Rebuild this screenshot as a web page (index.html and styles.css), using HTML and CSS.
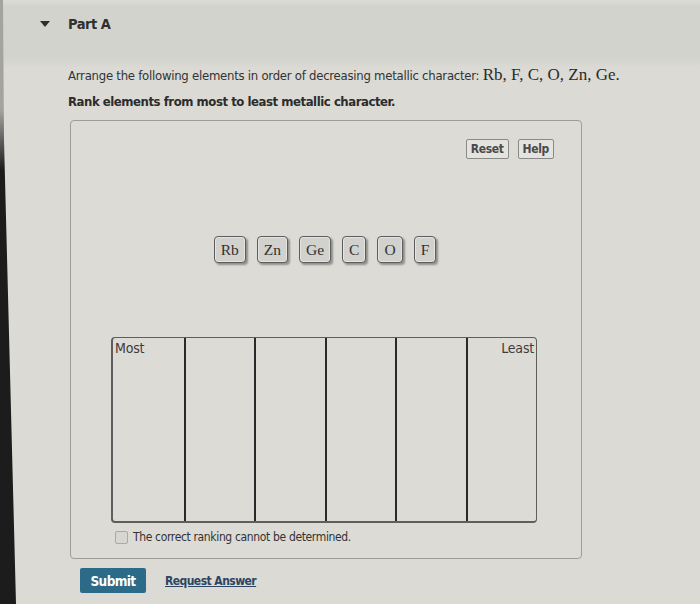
FILE: index.html
```html
<!DOCTYPE html>
<html lang="en">
<head>
<meta charset="utf-8">
<title>Part A</title>
<link rel="stylesheet" href="styles.css">
</head>
<body>
<div class="screen">
  <div class="bezel"></div>
  <main class="main">
    <header class="part-head">
      <span class="caret"></span>
      <h2 class="part-title">Part A</h2>
    </header>
    <section class="question">
      <p class="prompt">Arrange the following elements in order of decreasing metallic character: <span class="math">Rb, F, C, O, Zn, Ge.</span></p>
      <p class="instruction">Rank elements from most to least metallic character.</p>
      <div class="widget">
        <div class="tools">
          <button class="tool-btn">Reset</button>
          <button class="tool-btn">Help</button>
        </div>
        <div class="tiles">
          <span class="tile">Rb</span>
          <span class="tile">Zn</span>
          <span class="tile">Ge</span>
          <span class="tile">C</span>
          <span class="tile">O</span>
          <span class="tile">F</span>
        </div>
        <div class="board">
          <div class="ranking">
            <div class="slot"><span class="slot-label">Most</span></div>
            <div class="slot"></div>
            <div class="slot"></div>
            <div class="slot"></div>
            <div class="slot"></div>
            <div class="slot slot-last"><span class="slot-label">Least</span></div>
          </div>
          <label class="cannot"><span class="checkbox"></span>The correct ranking cannot be determined.</label>
        </div>
      </div>
      <div class="actions">
        <button class="submit">Submit</button>
        <a class="request">Request Answer</a>
      </div>
    </section>
  </main>
</div>
</body>
</html>
```

FILE: styles.css
```css
html, body {
  margin: 0;
  padding: 0;
}

body {
  width: 700px;
  height: 604px;
  overflow: hidden;
  background: linear-gradient(to bottom, #dcdcd7 0, #d3d3ce 6px, #d3d3ce 58px, #dbdad5 68px, #dbdad5 100%);
  font-family: "DejaVu Sans Condensed", "Liberation Sans", sans-serif;
  color: #333;
}

.screen {
  display: flex;
  height: 604px;
}

.bezel {
  flex: 0 0 16px;
  background: linear-gradient(to bottom, #a3a3a0 0, #a3a3a0 110px, #1c1c1c 170px, #1c1c1c 100%);
  clip-path: polygon(0 0, 3px 0, 4px 140px, 16px 100%, 0 100%);
}

.main {
  flex: 1;
  display: flex;
  flex-direction: column;
}

.part-head {
  height: 65px;
  box-sizing: border-box;
  padding: 14px 0 0 24px;
  display: flex;
  align-items: flex-start;
}

.caret {
  width: 0;
  height: 0;
  border-left: 5px solid transparent;
  border-right: 5px solid transparent;
  border-top: 6px solid #2e2e2e;
  margin-top: 7px;
}

.part-title {
  margin: 0 0 0 18px;
  font-size: 14.5px;
  letter-spacing: -0.5px;
  line-height: 20px;
  font-weight: bold;
  color: #2f2f2f;
}

.question {
  padding-left: 52px;
}

.prompt {
  margin: 0;
  font-size: 13px;
  letter-spacing: -0.25px;
  line-height: 20px;
  color: #333;
}

.math {
  font-family: "Liberation Serif", serif;
  font-size: 17px;
  letter-spacing: 0;
  line-height: 20px;
  color: #2a2a2a;
}

.instruction {
  margin: 6px 0 0;
  font-size: 13px;
  letter-spacing: -0.45px;
  line-height: 20px;
  font-weight: bold;
  color: #2c2c2c;
}

.widget {
  margin: 8px 0 0 2px;
  width: 512px;
  height: 439px;
  box-sizing: border-box;
  border: 1px solid #9d9d9a;
  border-radius: 4px;
  background: #dcdbd6;
  padding-top: 18px;
  display: flex;
  flex-direction: column;
}

.tools {
  display: flex;
  justify-content: flex-end;
  gap: 9px;
  padding-right: 27px;
}

.tool-btn {
  height: 20px;
  box-sizing: border-box;
  padding: 0 4px;
  border: 1px solid #8a8a88;
  border-radius: 2px;
  background: #e3e3df;
  font-family: "DejaVu Sans Condensed", "Liberation Sans", sans-serif;
  font-weight: bold;
  font-size: 12px;
  letter-spacing: -0.35px;
  line-height: 18px;
  color: #4a4a4a;
}

.tiles {
  display: flex;
  justify-content: center;
  gap: 11px;
  margin-top: 77px;
  padding-right: 2px;
}

.tile {
  height: 27px;
  box-sizing: border-box;
  padding: 0 6px;
  border: 1px solid #5d5d5d;
  border-radius: 4px;
  background: #d1d1cd;
  box-shadow: 2px 2px 2px rgba(0, 0, 0, 0.35), inset 0 0 0 1px #e4e4e0;
  font-family: "Liberation Serif", serif;
  font-size: 15.5px;
  line-height: 25px;
  color: #333;
}

.board {
  width: 426px;
  margin: 74px 0 0 40px;
}

.ranking {
  height: 186px;
  box-sizing: border-box;
  display: grid;
  grid-template-columns: repeat(6, 1fr);
  border-style: solid;
  border-color: #5e5e5e;
  border-width: 1px 1px 2px 2px;
  border-radius: 4px;
}

.slot {
  display: flex;
  align-items: flex-start;
  padding: 1px 2px;
}

.slot + .slot {
  border-left: 2px solid #2a2a2a;
}

.slot-last {
  justify-content: flex-end;
}

.slot-label {
  font-size: 14px;
  letter-spacing: -0.2px;
  line-height: 18px;
  color: #3c3c3c;
}

.cannot {
  margin-top: 7px;
  display: flex;
  align-items: center;
  gap: 5px;
  padding-left: 4px;
  font-size: 12px;
  letter-spacing: -0.35px;
  line-height: 14px;
  color: #333;
}

.checkbox {
  width: 11px;
  height: 11px;
  border: 1px solid #a9a9a6;
  border-radius: 2px;
  background: #d6d6d2;
}

.actions {
  margin-top: 9px;
  display: flex;
  align-items: center;
  gap: 19px;
  padding-left: 12px;
}

.submit {
  width: 66px;
  height: 25px;
  border: none;
  border-radius: 2px;
  background: #2b6b88;
  color: #fff;
  font-family: "DejaVu Sans Condensed", "Liberation Sans", sans-serif;
  font-weight: bold;
  font-size: 13.5px;
  letter-spacing: -0.6px;
}

.request {
  font-weight: bold;
  font-size: 12px;
  letter-spacing: -0.55px;
  color: #2c4663;
  text-decoration: underline;
}
```
